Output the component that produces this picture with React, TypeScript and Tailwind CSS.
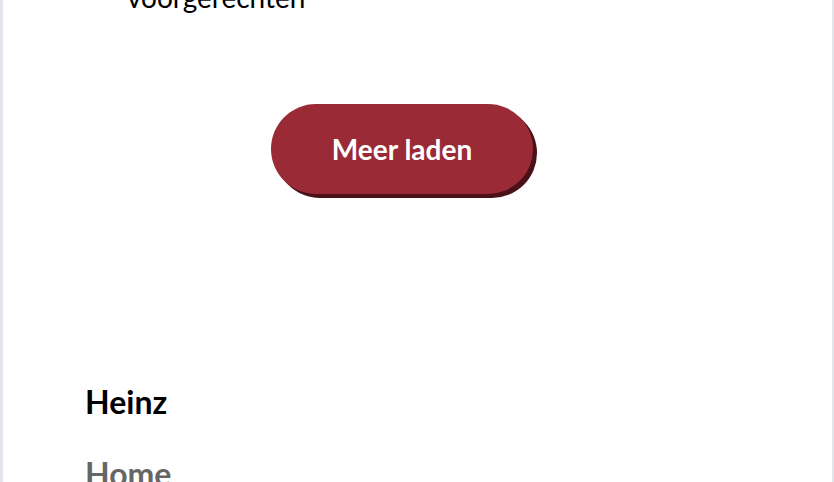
import React from 'react';

function App() {
  return (
    <div className="h-[482px] overflow-hidden bg-white border-l-[3px] border-r-[2px] border-[#e3e3ec] font-['Lato',_'Noto_Sans',_sans-serif]">
      <div className="pl-[124px] -mt-[18px] text-[28px] leading-[30px] text-black">voorgerechten</div>

      <div className="mt-[92px] pl-[268px]">
        <button className="w-[262px] h-[90px] rounded-full bg-[#9b2a37] text-white text-[28px] font-bold shadow-[4px_4px_0_#4b1119]">
          Meer laden
        </button>
      </div>

      <footer className="mt-[188px] pl-[82px]">
        <h2 className="text-[32px] leading-[40px] font-bold text-black">Heinz</h2>
        <div className="mt-[32px] text-[32px] leading-[40px] font-bold text-[#666666]">Home</div>
      </footer>
    </div>
  );
}

export default App;
